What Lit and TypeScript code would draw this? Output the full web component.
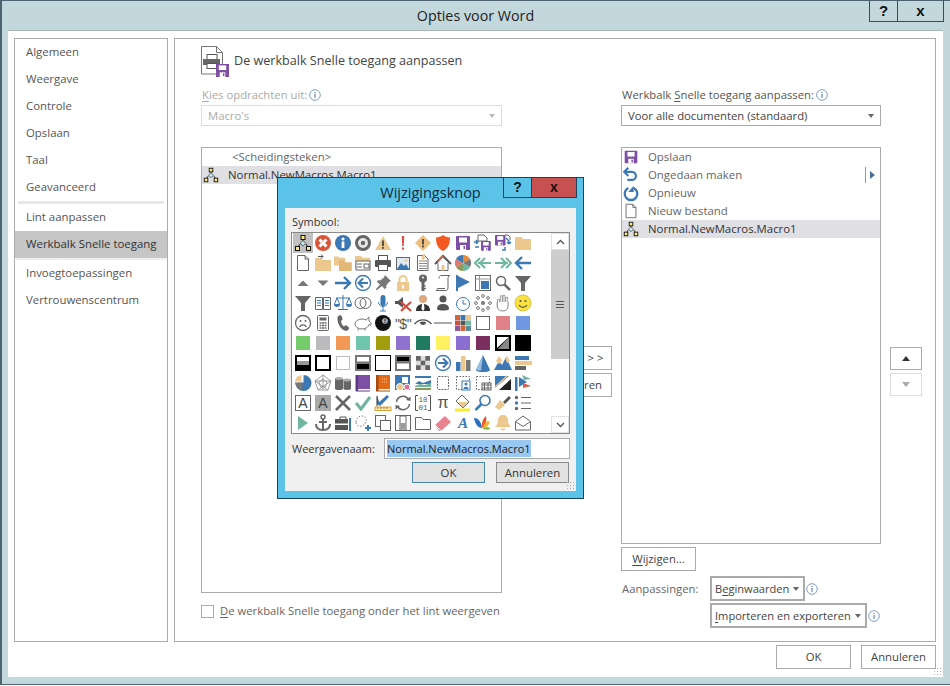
import { LitElement, html, css, svg } from 'lit';
import { customElement } from 'lit/decorators.js';

const B = '#3c78b4';
const T = '#edc88e';
const G = '#666';
const TL = '#6fb5a0';
const P = '#7d4fa5';

const floppy = (x: number, y: number, s: number, c = P) => svg`<g transform="translate(${x} ${y}) scale(${s})"><rect width="14" height="14" rx="1" fill=${c}/><rect x="3" y="1.5" width="8" height="5" fill="#fff"/><rect x="4" y="9" width="6" height="5" fill="#fff"/><rect x="7.5" y="10" width="1.6" height="3" fill=${c}/></g>`;
const folder = (x: number, y: number, s: number, c = T) => svg`<path transform="translate(${x} ${y}) scale(${s})" d="M0 2h6l2 2h8v11H0z" fill=${c}/>`;
const sq = (c: string) => svg`<rect x="3" y="3" width="14" height="14" fill=${c}/>`;
const page = svg`<path d="M4.5 2.5h7.5l3.5 3.5v11.5h-11z" fill="#fff" stroke=${G}/><path d="M12 2.5v3.5h3.5" fill="none" stroke=${G}/>`;
const dash = svg`<rect x="3.5" y="3.5" width="13" height="13" fill="#fff" stroke=${G} stroke-dasharray="1.5 1.5"/>`;
const net = svg`<path d="M10 6v2M7 11l-2 3M13 11l2 3" stroke="#222" fill="none"/><path d="M10 7.5l2.8 2.8-2.8 2.8-2.8-2.8z" fill="#bfe4ec" stroke="#333" stroke-width=".7"/><rect x="8" y="2.5" width="4" height="4" fill="#ffe97a" stroke="#111"/><rect x="2.5" y="13.5" width="4" height="4" fill="#ffe97a" stroke="#111"/><rect x="13.5" y="13.5" width="4" height="4" fill="#ffe97a" stroke="#111"/>`;
const txt = (s: string, x: number, y: number, size: number, fill: string) => svg`<text x=${x} y=${y} font-size=${size} fill=${fill} text-anchor="middle" font-family="Liberation Sans, sans-serif">${s}</text>`;
const chev = (flip: boolean) => svg`<g transform=${flip ? 'matrix(-1 0 0 1 20 0)' : ''} fill="none" stroke=${TL} stroke-width="2"><path d="M7 5l-5 5 5 5M12 5l-5 5 5 5M5 10h13"/></g>`;
const circArrow = (flip: boolean) => svg`<circle cx="10" cy="10" r="7.5" fill="#fff" stroke=${B} stroke-width="1.3"/><g transform=${flip ? 'matrix(-1 0 0 1 20 0)' : ''} fill="none" stroke=${B} stroke-width="2"><path d="M10 5.5l-4.5 4.5 4.5 4.5M6 10h9"/></g>`;
const funnel = svg`<path d="M2 3h16l-6 7v8h-4v-8z" fill=${G}/>`;

// symbol picker, 12 columns by 10 rows, in the order of the dialog
const SYMBOLS = [
  net,
  svg`<circle cx="10" cy="10" r="8" fill="#d8553b"/><path d="M6.5 6.5l7 7M13.5 6.5l-7 7" stroke="#fff" stroke-width="3"/>`,
  svg`<circle cx="10" cy="10" r="8" fill=${B}/><rect x="8.6" y="8.5" width="2.8" height="6.5" fill="#fff"/><circle cx="10" cy="6" r="1.6" fill="#fff"/>`,
  svg`<circle cx="10" cy="10" r="6.5" fill="#e8e8e8" stroke=${G} stroke-width="3"/><circle cx="10" cy="10" r="2.2" fill=${G}/>`,
  svg`<path d="M10 3l8 14H2z" fill=${T}/><rect x="9.1" y="7.5" width="1.8" height="5.5" fill="#444"/><rect x="9.1" y="14" width="1.8" height="1.8" fill="#444"/>`,
  svg`<path d="M8.7 3h2.6l-.5 10H9.2z" fill="#d9534f"/><rect x="9" y="14.5" width="2" height="2.2" fill="#d9534f"/>`,
  svg`<path d="M10 2l8 8-8 8-8-8z" fill="#ecc07c"/><rect x="9.1" y="6" width="1.8" height="5.5" fill="#444"/><rect x="9.1" y="12.5" width="1.8" height="1.8" fill="#444"/>`,
  svg`<path d="M10 2c2.5 1.8 4.5 2.4 7 2.4 0 6.5-1.8 11-7 13.6C4.800 15.400 3 10.900 3 4.400 5.500 4.400 7.500 3.800 10 2z" fill="#f25a22"/>`,
  floppy(3, 3, 1),
  svg`<path d="M5 2h6l3 3v3H5z" fill="#fff" stroke=${G}/><path d="M1 9h4M3 7l2 2-2 2M6 14H2" stroke=${B} fill="none" stroke-width="1.4"/>${floppy(8, 8, 0.7)}`,
  svg`${floppy(2, 2, 0.75)}<path d="M13 5l3 3v3M16 11l-2-2M16 11l2-2M12 14v3h-3" stroke=${B} fill="none" stroke-width="1.4"/><path d="M12 2h3l2 2v3" fill="none" stroke=${G}/>`,
  folder(2, 2, 1),

  page,
  svg`${folder(2, 3, 1)}<path d="M5 3.500h5M8 1.500l2 2-2 2" stroke="#555" fill="none"/>`,
  svg`${folder(1, 2, 0.7)}${folder(6, 6, 0.8, '#e3b877')}`,
  svg`${folder(2, 1, 0.95)}<rect x="3" y="8" width="14" height="9" fill="#fff" stroke=${G}/><path d="M4 11h5M4 14h5" stroke=${G}/><rect x="11" y="11" width="5" height="4" fill="#fff" stroke=${G}/>`,
  svg`<rect x="5.500" y="2.500" width="9" height="5" fill="#fff" stroke="#555"/><rect x="2" y="7" width="16" height="7" rx="1" fill="#555"/><rect x="5.500" y="11.500" width="9" height="6" fill="#fff" stroke="#555"/>`,
  svg`<rect x="3.500" y="4.500" width="13" height="12" fill="#dfeaf3" stroke=${G}/><path d="M4 16l4-6 3 3 2-2 3 5z" fill=${B}/><circle cx="13" cy="7.500" r="1.300" fill=${T}/>`,
  svg`<path d="M4.500 2.500h7l3.500 3.500v11.500H4.500z" fill="#fff" stroke=${G}/><path d="M6 8h8M6 10.500h8M6 13h8M6 15.500h8" stroke="#888"/><path d="M10 1l-2 5h2l-1 3 4-5h-2l1-3z" fill=${T}/>`,
  svg`<path d="M5 10v7.500h10V10" fill="#fff" stroke=${G}/><rect x="8.500" y="12" width="3" height="5.500" fill=${T}/><path d="M2 11l8-8 8 8" fill="none" stroke="#555" stroke-width="2"/><path d="M10 3l-5 5" stroke="#c96f4a" stroke-width="2"/>`,
  svg`<path d="M10 10V2a8 8 0 0 1 7 4z" fill="#e88a3a"/><path d="M10 10l7-4a8 8 0 0 1 0 8z" fill="#777"/><path d="M10 10l7 4a8 8 0 0 1-7 4z" fill=${TL}/><path d="M10 10v8a8 8 0 0 1-7-4z" fill="#8c9a5c"/><path d="M10 10l-7 4a8 8 0 0 1 0-8z" fill="#e0766e"/><path d="M10 10L3 6a8 8 0 0 1 7-4z" fill=${B}/>`,
  chev(false),
  chev(true),
  svg`<path d="M9 4l-6 6 6 6M3 10h15" fill="none" stroke=${B} stroke-width="2.400"/>`,

  svg`<path d="M4.500 13h11L10 7.500z" fill="#777"/>`,
  svg`<path d="M4.500 7.500h11L10 13z" fill="#777"/>`,
  svg`<path d="M11 4l6 6-6 6M17 10H2" fill="none" stroke=${B} stroke-width="2.400"/>`,
  circArrow(false),
  svg`<path d="M12 2l6 6-2 1-3 4 .500 2-2 1-2.500-3L4 17l-1 0 0-1 4-4.500L4 9l1-2 2 .500 4-3z" fill="#777"/>`,
  svg`<path d="M6.500 9V6.500a3.500 3.500 0 0 1 7 0V9" fill="none" stroke=${T} stroke-width="2"/><rect x="4" y="9" width="12" height="9" fill=${T}/><rect x="9" y="12" width="2" height="3.500" fill="#fff"/>`,
  svg`<circle cx="10" cy="5.500" r="4" fill=${G}/><circle cx="10" cy="4.500" r="1" fill="#fff"/><path d="M8.500 9h3v9h-3z" fill=${G}/><path d="M11 13h2M11 15.500h2" stroke=${G}/>`,
  svg`<path d="M6 5.500c0-3 2-3 2-3h9c-1 0-2 1-2 3v9c0 2-1 3-2 3H3c1 0 1.500-1 1.500-2H12" fill="none" stroke=${G}/>`,
  svg`<rect x="3" y="2" width="2" height="16" fill=${B}/><path d="M5 3l12 6-12 6z" fill=${B}/>`,
  svg`<rect x="2.500" y="2.500" width="15" height="15" fill="#fff" stroke=${G}/><path d="M2.500 6h15M6.500 2.500v15" stroke="#999"/><rect x="8" y="8" width="8" height="8" fill=${B}/>`,
  svg`<circle cx="8" cy="8" r="4.500" fill="#fff" stroke=${G} stroke-width="1.500"/><path d="M11.500 11.500l5.500 5.500" stroke=${G} stroke-width="2.500"/>`,
  funnel,

  funnel,
  svg`<path d="M2.500 4.500h7v12h-7zM10.500 4.500h7v12h-7z" fill="#fff" stroke=${G}/><path d="M4 7.500h4M4 10h4M4 12.500h4M12 7.500h4M12 10h4M12 12.500h4" stroke=${B}/>`,
  svg`<path d="M10 2v14M5 16.500h10M3 5h14M4 5l-2.500 6M4 5l2.500 6M16 5l-2.500 6M16 5l2.500 6" stroke=${B} fill="none"/><path d="M1 11h6a3 3 0 0 1-6 0zM13 11h6a3 3 0 0 1-6 0z" fill=${B}/>`,
  svg`<circle cx="7.500" cy="10" r="5.500" fill="#fff" stroke=${G}/><circle cx="12.500" cy="10" r="5.500" fill="none" stroke=${G}/>`,
  svg`<rect x="7.500" y="2" width="5" height="11" rx="2.500" fill=${B}/><path d="M5.500 9a4.500 4.500 0 0 0 9 0M10 13.500V18M7 18h6" stroke=${B} fill="none"/>`,
  svg`<path d="M2 8h3l5-4v11l-5-4H2z" fill="#555"/><path d="M8 9l10 9M18 9L8 18" stroke="#d9483a" stroke-width="2.200"/>`,
  svg`<circle cx="10" cy="6" r="4" fill="#dca982"/><path d="M3 18c0-5 3-7 7-7s7 2 7 7z" fill="#333"/><path d="M9 11h2l.500 5-1.500 2-1.500-2z" fill="#fff"/>`,
  svg`<circle cx="10" cy="6" r="3.500" fill="#555"/><path d="M4 16c0-4 3-5 6-5s6 1 6 5c0 2-12 2-12 0z" fill="#555"/>`,
  svg`<circle cx="10" cy="11" r="6.500" fill="#fff" stroke=${B}/><path d="M10 7v4h3.500" fill="none" stroke=${B}/>`,
  svg`<g fill="none" stroke="#777"><circle cx="10" cy="3" r="1.400"/><circle cx="10" cy="17" r="1.400"/><circle cx="3" cy="10" r="1.400"/><circle cx="17" cy="10" r="1.400"/><circle cx="5" cy="5" r="1.400"/><circle cx="15" cy="5" r="1.400"/><circle cx="5" cy="15" r="1.400"/><circle cx="15" cy="15" r="1.400"/></g><circle cx="10" cy="10" r="2" fill="#777"/>`,
  svg`<path d="M5.500 13V7M8.200 11V3.500M11 11V3M13.800 11V5" stroke="#888" stroke-width="2.600" stroke-linecap="round"/><path d="M5.500 13V7M8.200 11V3.500M11 11V3M13.800 11V5" stroke="#fff" stroke-width="1.200" stroke-linecap="round"/><path d="M4.500 12c0 3 2 6 5.500 6s5-2 5-5V9H4.500z" fill="#fff"/><path d="M4.200 9v4c0 3 2 5 5.800 5 3.500 0 5.100-2 5.100-5V9" fill="none" stroke="#888"/>`,
  svg`<circle cx="10" cy="10" r="8" fill="#fbe23f" stroke="#d9c34a"/><circle cx="7.500" cy="8" r="1.100" fill="#555"/><circle cx="12.500" cy="8" r="1.100" fill="#555"/><path d="M6 12a4.500 4.500 0 0 0 8 0" fill="none" stroke="#555" stroke-width="1.200"/>`,

  svg`<circle cx="10" cy="10" r="7.500" fill="#fff" stroke=${G} stroke-width="1.300"/><circle cx="7.500" cy="8" r="1" fill=${G}/><circle cx="12.500" cy="8" r="1" fill=${G}/><path d="M6.500 14a4 4 0 0 1 7 0" fill="none" stroke=${G} stroke-width="1.300"/>`,
  svg`<rect x="4.500" y="2.500" width="11" height="15" rx="1" fill="#fff" stroke=${G}/><rect x="6.500" y="4.500" width="7" height="3" fill=${G}/><path d="M6.500 10h2M9 10h2M11.500 10h2M6.500 12.500h2M9 12.500h2M11.500 12.500h2M6.500 15h2M9 15h2M11.500 15h2" stroke=${G} stroke-width="1.300"/>`,
  svg`<path d="M5 3c2-1.500 3.500-1 4 1l.500 2c.300 1-1 1.500-1.500 2 0 2 1.500 4.500 3 5.500.500-.500 1.500-1.500 2.500-1l2 1.500c1 1 .500 2-.500 3-1 1.500-4 1-6.500-1.500S4 8 4.500 4.500z" fill=${G}/>`,
  svg`<ellipse cx="9" cy="11" rx="7" ry="5" fill="#fff" stroke="#777"/><path d="M13 7l3-3v4l2 2v2h-2" fill="#fff" stroke="#777"/><path d="M5 15.500v2M12 15.500v2" stroke="#777"/>`,
  svg`<circle cx="10" cy="10" r="8" fill="#111"/><circle cx="12" cy="8" r="2.800" fill="#ccc"/>${txt('8', 12, 10, 5.500, '#111')}`,
  svg`<text x="10" y="16" font-size="14" fill="#555" text-anchor="middle" font-family="Liberation Sans, sans-serif" letter-spacing="-.5">"$"</text>`,
  svg`<path d="M1.500 11c5-5.500 12-5.500 17 0" fill="none" stroke="#555" stroke-width="1.400"/><path d="M7 9a3 3 0 0 0 6 0 8 8 0 0 0-6 0z" fill="#555"/>`,
  svg`<rect x="1" y="9.500" width="18" height="1" fill="#555"/>`,
  svg`<rect x="2" y="2" width="5" height="5" fill="#d0643a"/><rect x="7.500" y="2" width="5" height="5" fill=${B}/><rect x="13" y="2" width="5" height="5" fill=${T}/><rect x="2" y="7.500" width="5" height="5" fill="#c94f3a"/><rect x="7.500" y="7.500" width="5" height="5" fill="#555"/><rect x="13" y="7.500" width="5" height="5" fill=${TL}/><rect x="2" y="13" width="5" height="5" fill="#8c5a9a"/><rect x="7.500" y="13" width="5" height="5" fill="#d0643a"/><rect x="13" y="13" width="5" height="5" fill="#5a8a94"/>`,
  svg`<rect x="3.500" y="3.500" width="13" height="13" fill="#fff" stroke=${G}/>`,
  sq('#e08288'),
  sq('#7098e0'),

  sq('#76cc6c'),
  sq('#bbbbbd'),
  sq('#f29a55'),
  sq('#6fc6ac'),
  sq('#a29c0f'),
  sq('#8f72cf'),
  sq('#1f7a5f'),
  sq('#fdf162'),
  sq('#8b6fd0'),
  sq('#7a2f5f'),
  svg`<rect x="2" y="2" width="16" height="16" fill="#000"/><path d="M4 15L16 4H4z" fill="#fff"/><path d="M16 4v12H5z" fill="#888"/>`,
  svg`<rect x="2" y="2" width="16" height="16" fill="#000"/>`,

  svg`<rect x="2" y="2" width="16" height="16" fill="#000"/><rect x="4" y="4" width="12" height="4" fill="#fff"/><rect x="4" y="8" width="12" height="4" fill="#999"/>`,
  svg`<rect x="3" y="3" width="14" height="14" fill="#fff" stroke="#000" stroke-width="2"/>`,
  svg`<rect x="3.500" y="3.500" width="13" height="13" fill="#fff" stroke="#777" stroke-dasharray="1 1"/>`,
  svg`<rect x="3" y="3" width="14" height="14" fill="#fff" stroke="#777" stroke-width="2"/><rect x="4" y="11" width="12" height="5" fill="#000"/><rect x="4" y="8.500" width="12" height="2.500" fill="#777"/>`,
  svg`<rect x="2.500" y="2.500" width="15" height="15" fill="#fff" stroke="#000"/>`,
  svg`<rect x="3" y="3" width="14" height="14" fill="#fff" stroke="#777" stroke-width="2"/><rect x="4" y="4" width="12" height="4.500" fill="#000"/><rect x="4" y="8.500" width="12" height="2" fill="#777"/>`,
  svg`<rect x="3" y="3" width="14" height="14" fill="#ddd"/><path d="M3 3h4.700v4.700H3zM12.300 3H17v4.700h-4.700zM7.700 7.700h4.600v4.600H7.700zM3 12.300h4.700V17H3zM12.300 12.300H17V17h-4.700z" fill="#666"/>`,
  circArrow(true),
  svg`<rect x="3" y="9" width="4.500" height="9" fill=${B}/><rect x="8" y="3" width="4.500" height="15" fill=${T}/><rect x="13" y="7" width="4.500" height="11" fill="#777"/>`,
  svg`<path d="M10 2l7 15a7 2 0 0 1-14 0z" fill=${B}/><path d="M10 2l-2 15.500c-2.500 0-4-.500-5-1z" fill="#9cc0e0"/>`,
  svg`<path d="M1 17l5-9 3 4 4-8 6 13z" fill=${B}/><path d="M3 8l3-5 3.500 5-3.500 3zM12 5l2-2 3 5-3 2z" fill=${T}/>`,
  svg`<rect x="2" y="3" width="14" height="4" fill=${B}/><rect x="2" y="8" width="17" height="4" fill=${T}/><rect x="2" y="13" width="11" height="4" fill="#666"/>`,

  svg`<path d="M10.500 9.500V2a8 8 0 1 1-8 8z" fill=${B}/><path d="M8.500 8.500V2a8 8 0 0 0-6.500 6.500z" fill=${T}/><path d="M2 9.500h7.500V17A8 8 0 0 1 2 9.500z" fill="#777"/>`,
  svg`<path d="M10 2l8 6-3 9H5L2 8zM10 6l4 3-1.500 5h-5L6 9zM10 2v15M2 8l16 0M5 17L18 8M15 17L2 8" fill="none" stroke="#888" stroke-width=".8"/>`,
  svg`<path d="M2 5.500v10a4 1.500 0 0 0 8 0v-10z" fill=${G}/><ellipse cx="6" cy="5.500" rx="4" ry="1.500" fill="#aaa"/><path d="M10.500 7v9a4 1.500 0 0 0 7.500 0V7z" fill=${G}/><ellipse cx="14" cy="7" rx="4" ry="1.500" fill="#aaa"/>`,
  svg`<rect x="3" y="2" width="14" height="14" fill=${P}/><path d="M3 2v16h14" fill="none" stroke="#5c3a80"/><rect x="3" y="2" width="2" height="16" fill="#5c3a80"/>`,
  svg`<rect x="3" y="2" width="14" height="14" fill="#e56a17"/><rect x="3" y="2" width="2.500" height="16" fill="#a84a10"/><path d="M3 18h14" stroke="#a84a10"/><path d="M9 6h6M9 9h6" stroke="#fbd09f" stroke-dasharray="1 1"/>`,
  svg`<rect x="2" y="2" width="15" height="15" fill=${B}/><rect x="9" y="4" width="6" height="6" fill="#fff"/><circle cx="7" cy="14" r="3.500" fill=${T} stroke="#fff"/><circle cx="14" cy="14" r="3" fill="#e26d9c" stroke="#fff"/>`,
  svg`<rect x="2" y="3" width="16" height="14" fill="#fff"/><path d="M2 4h16" stroke=${B} stroke-width="2"/><path d="M2 11l4-3 4 2 8-3v4H2z" fill=${B}/><path d="M2 13l5-2 5 1 6-2v4H2z" fill=${TL}/><path d="M2 16h16" stroke="#8c9a5c" stroke-width="2"/>`,
  svg`<rect x="4.500" y="3.500" width="11" height="13" rx="1" fill="#fff" stroke=${G} stroke-dasharray="2 1"/>`,
  svg`${dash}<rect x="9" y="8" width="8" height="9" fill="#fff" stroke=${B}/><circle cx="13" cy="11" r="1.500" fill=${B}/><path d="M10.500 16c0-3 5-3 5 0z" fill=${B}/>`,
  svg`${dash}<rect x="9" y="10" width="9" height="7" fill="#fff" stroke=${G}/><path d="M9 12h9M9 15h9M11.500 10v7M15 10v7" stroke=${G}/>`,
  svg`<rect x="2" y="3" width="16" height="14" fill="#fff"/><path d="M2 3h14L2 15z" fill=${B}/><path d="M2 14L14 3" stroke=${T} stroke-width="1.500"/><path d="M18 17H6L18 6z" fill="#222"/>`,
  svg`<rect x="2" y="4" width="2.500" height="14" fill=${B}/><path d="M6 4l8 5-8 5z" fill=${B}/><path d="M9 2l9 4-7 1z" fill=${TL}/><path d="M10 10l8 3-8 2z" fill="#d9604a"/>`,

  svg`<rect x="2.500" y="2.500" width="15" height="15" fill="#fff" stroke=${G}/>${txt('A', 10, 15, 14, '#444')}`,
  svg`<rect x="2" y="2" width="16" height="16" fill="#aaa"/>${txt('A', 10, 15, 14, '#444')}`,
  svg`<path d="M3 3l14 14M17 3L3 17" stroke=${G} stroke-width="2.600"/>`,
  svg`<path d="M3 10l5 6L17 4" fill="none" stroke=${TL} stroke-width="3"/>`,
  svg`<path d="M4 3l3 8-3 0zM4 11l10-9 2 2-9 9z" fill=${B}/><path d="M4 3v10" stroke="#333"/><rect x="2" y="14" width="16" height="3.500" fill="#f5e7b8" stroke="#d8a33b"/><path d="M5 14v2M8 14v2M11 14v2M14 14v2" stroke="#a8781f"/>`,
  svg`<g fill="none" stroke=${G} stroke-width="1.500"><path d="M3.500 9a6.500 6.500 0 0 1 12-2.500M16.500 11a6.500 6.500 0 0 1-12 2.500"/></g><path d="M13 7l4.500 1 0-4.500zM7 13l-4.500-1 0 4.500z" fill=${G}/>`,
  svg`<path d="M5 2.500H2.500v15H5M15 2.500h2.500v15H15" fill="none" stroke="#555"/><text x="10" y="9" font-size="7.500" fill="#555" text-anchor="middle" font-family="Liberation Mono, monospace">10</text><text x="10" y="16.500" font-size="7.500" fill="#555" text-anchor="middle" font-family="Liberation Mono, monospace">01</text>`,
  txt('π', 10, 15, 16, '#555'),
  svg`<path d="M9 2l7 7-6 6-7-7z" fill="#fff" stroke=${G}/><path d="M5 9h10l-5 5.500z" fill=${T}/><rect x="2" y="15.500" width="15" height="3" fill="#f3ee2f"/>`,
  svg`<circle cx="12" cy="7.500" r="5" fill="#fff" stroke=${B} stroke-width="1.600"/><path d="M8.500 11l-6 6" stroke=${B} stroke-width="2.500"/>`,
  svg`<path d="M2 14l5-7 5 5-6 5z" fill=${T}/><path d="M10 9l6-6 2 2-6 6z" fill="#555"/>`,
  svg`<circle cx="3.500" cy="4.500" r="1.700" fill=${G}/><circle cx="3.500" cy="10" r="1.700" fill=${B}/><circle cx="3.500" cy="15.500" r="1.700" fill=${G}/><path d="M8 4.500h10M8 10h10M8 15.500h10" stroke=${G} stroke-width="1.200"/>`,

  svg`<path d="M5 3l10 7-10 7z" fill=${TL}/>`,
  svg`<circle cx="10" cy="4" r="2" fill="none" stroke=${G} stroke-width="1.500"/><path d="M10 6v12M6 9h8M3 11c0 4 3 6 7 6s7-2 7-6" fill="none" stroke=${G} stroke-width="2"/>`,
  svg`<path d="M7 6V4h6v2" fill="none" stroke="#555"/><rect x="2" y="6" width="13" height="11" fill="#555"/><rect x="2" y="10.500" width="13" height="1.500" fill="#fff"/><path d="M17 5v13" stroke=${B} stroke-width="2"/>`,
  svg`<path d="M3 9c0-4 3-6 6-6s5 3 4 6-4 5-7 4c-2 0-3-2-3-4z" fill="none" stroke="#888" stroke-dasharray="1.500 1.500"/><path d="M15 12v6M12 15h6" stroke=${B} stroke-width="2"/>`,
  svg`<rect x="2.500" y="2.500" width="10" height="11" fill="#fff" stroke=${G}/><rect x="7.500" y="7.500" width="10" height="10" fill="#fff" stroke=${G}/>`,
  svg`<rect x="2.500" y="2.500" width="15" height="15" fill="#fff" stroke=${G}/><rect x="7" y="3" width="6" height="14" fill="#fff" stroke=${G}/><rect x="7.500" y="10" width="5" height="6" fill="#999"/>`,
  svg`<path d="M2.500 4.500h6l1.500 2h7.500v10h-15z" fill="#fff" stroke=${G}/>`,
  svg`<path d="M2 12L12 3l6 6-10 9H6z" fill="#e9828c"/><path d="M2 12l6 6" stroke="#fff"/>`,
  svg`<text x="10" y="15" font-size="15" font-weight="bold" font-style="italic" fill=${B} text-anchor="middle" font-family="Liberation Serif, serif">A</text>`,
  svg`<path d="M1 5c4 0 7 3 8 10-4 0-7-4-8-10z" fill="#2a6fc0"/><path d="M9 15c-1-4 1-10 4-12 1 4 0 9-4 12z" fill="#e8562a"/><path d="M9.500 15c1-4 4-7 7-7 0 4-3 7-7 7z" fill="#f6b22f"/><path d="M9.500 15c3-1 6-1 8 0-2 2-6 2-8 0z" fill="#6cb33f"/>`,
  svg`<path d="M10 2c3 0 5 2 5 5s1 5 3 7H2c2-2 3-4 3-7s2-5 5-5z" fill=${T}/><path d="M7.500 15.500h5a2.500 2 0 0 1-5 0z" fill=${T}/>`,
  svg`<path d="M2.500 8.500L10 3l7.500 5.500v8.500h-15z" fill="#fff" stroke=${G}/><path d="M2.500 8.500l7.500 5 7.500-5" fill="none" stroke=${G}/>`,
];

const headerIcon = html`<svg class="head-icon" width="28" height="31" viewBox="0 0 28 31"><path d="M.5.500h15l6 6v21.500H.5z" fill="#fff" stroke="#777"/><path d="M15.500.500v6h6" fill="none" stroke="#777"/><rect x="6" y="8.500" width="10" height="6" fill="#fff" stroke="#555"/><rect x="2" y="13" width="17" height="6" fill="#666"/><rect x="6" y="17.500" width="10" height="5" fill="#fff" stroke="#555"/><svg x="15" y="18" width="13" height="13" viewBox="0 0 14 14"><rect width="14" height="14" fill="#7d4fa5"/><rect x="3" y="1.500" width="8" height="5" fill="#fff"/><rect x="4" y="9" width="6" height="5" fill="#fff"/><rect x="7.500" y="10" width="1.600" height="3" fill="#7d4fa5"/></svg></svg>`;

const infoIcon = html`<svg class="info" width="12" height="12" viewBox="0 0 12 12"><circle cx="6" cy="6" r="5.300" fill="#fff" stroke="#7f9fcb"/><rect x="5.400" y="5" width="1.200" height="3.800" fill="#5f83b5"/><rect x="5.400" y="3" width="1.200" height="1.200" fill="#5f83b5"/></svg>`;

const ico = (frag: unknown, size = 18) => html`<svg width=${size} height=${size} viewBox="0 0 20 20">${frag}</svg>`;

const sharedStyles = css`
  .caret {
    display: inline-block;
    flex: none;
    width: 0;
    height: 0;
    border-left: 3.500px solid transparent;
    border-right: 3.500px solid transparent;
    border-top: 4px solid #666;
  }
  .grip {
    position: absolute;
    right: 2px;
    bottom: 2px;
    width: 8px;
    height: 8px;
    background-image: radial-gradient(#aaa 0.7px, transparent 0.9px);
    background-size: 3px 3px;
  }
  u {
    text-underline-offset: 2px;
  }
`;

@customElement('symbol-dialog')
export class SymbolDialog extends LitElement {
  static styles = [
    sharedStyles,
    css`
      :host {
        position: absolute;
        left: 277px;
        top: 177px;
        width: 307px;
        height: 322px;
        box-sizing: border-box;
        border: 1px solid #17445c;
        background: #5cc3e8;
        padding: 0 7px 7px;
        display: flex;
        flex-direction: column;
        font: 11px/16px 'Open Sans', sans-serif;
        color: #333;
      }
      .bar {
        height: 30px;
        flex: none;
        display: flex;
        justify-content: center;
        position: relative;
        font-size: 14.500px;
        line-height: 29px;
        color: #0d2c40;
      }
      .caps {
        position: absolute;
        right: -1px;
        top: 0;
        display: flex;
        height: 20px;
      }
      .cap {
        box-sizing: border-box;
        border: 1px solid #17445c;
        border-top: 0;
        font: bold 14px/18px 'Liberation Sans', sans-serif;
        text-align: center;
        color: #111;
      }
      .cap.help {
        width: 29px;
      }
      .cap.close {
        width: 46px;
        margin-left: -1px;
        background: #c75050;
      }
      .client {
        flex: 1;
        background: #f0f0f0;
        padding: 6px 6px 0;
        position: relative;
      }
      .sym-label {
        padding-left: 1px;
      }
      .box {
        margin-top: 2px;
        height: 202px;
        box-sizing: border-box;
        border: 1px solid #8a8a8a;
        background: #fff;
        display: flex;
        justify-content: space-between;
        padding-left: 1px;
      }
      .cells {
        display: grid;
        grid-template-columns: repeat(12, 20px);
        grid-auto-rows: 20px;
      }
      .cell {
        width: 20px;
        height: 20px;
      }
      .cell svg {
        display: block;
      }
      .cell.on {
        background: #c0c0c0;
      }
      .scroll {
        width: 18px;
        display: flex;
        flex-direction: column;
      }
      .sb-btn {
        height: 17px;
        flex: none;
        display: flex;
        align-items: center;
        justify-content: center;
        box-sizing: border-box;
        border: 1px solid #e2e2e2;
      }
      .thumb {
        height: 109px;
        flex: none;
        background: #cdcdcd;
        display: flex;
        align-items: center;
        justify-content: center;
      }
      .rest {
        flex: 1;
      }
      .name-row {
        margin-top: 4px;
        display: flex;
        align-items: center;
      }
      .name-row label {
        width: 93px;
        padding-left: 1px;
        box-sizing: border-box;
      }
      .input {
        width: 186px;
        height: 21px;
        box-sizing: border-box;
        border: 1px solid #aaa;
        background: #fff;
        padding: 1px 2px;
        line-height: 17px;
        color: #222;
      }
      .input span {
        display: inline-block;
        background: #99c8f2;
      }
      .btns {
        margin-top: 3px;
        padding-right: 1px;
        display: flex;
        justify-content: flex-end;
        gap: 11px;
      }
      .btn {
        width: 73px;
        height: 21px;
        box-sizing: border-box;
        border: 1px solid #8a8a8a;
        background: #e1e1e1;
        text-align: center;
        line-height: 19px;
        font-size: 11.400px;
      }
      .btn.def {
        border-color: #4a86a8;
      }
    `,
  ];

  render() {
    return html`
      <div class="bar">
        Wijzigingsknop
        <div class="caps">
          <div class="cap help">?</div>
          <div class="cap close">x</div>
        </div>
      </div>
      <div class="client">
        <div class="sym-label">Symbool:</div>
        <div class="box">
          <div class="cells">
            ${SYMBOLS.map((s, i) => html`<div class="cell ${i === 0 ? 'on' : ''}">${ico(s, 20)}</div>`)}
          </div>
          <div class="scroll">
            <div class="sb-btn">
              <svg width="9" height="6" viewBox="0 0 9 6"><path d="M1 5l3.500-3.500L8 5" fill="none" stroke="#555" stroke-width="1.300"/></svg>
            </div>
            <div class="thumb">
              <svg width="8" height="7" viewBox="0 0 8 7"><path d="M0 .5h8M0 3.500h8M0 6.500h8" stroke="#555"/></svg>
            </div>
            <div class="rest"></div>
            <div class="sb-btn">
              <svg width="9" height="6" viewBox="0 0 9 6"><path d="M1 1l3.500 3.500L8 1" fill="none" stroke="#555" stroke-width="1.300"/></svg>
            </div>
          </div>
        </div>
        <div class="name-row">
          <label>Weergavenaam:</label>
          <div class="input"><span>Normal.NewMacros.Macro1</span></div>
        </div>
        <div class="btns">
          <div class="btn def">OK</div>
          <div class="btn">Annuleren</div>
        </div>
        <div class="grip"></div>
      </div>
    `;
  }
}

@customElement('app-root')
export class AppRoot extends LitElement {
  static styles = [
    sharedStyles,
    css`
      :host {
        display: block;
        position: relative;
        width: 950px;
        height: 686px;
        background: #fff;
        overflow: hidden;
        font: 11.300px/16px 'Open Sans', sans-serif;
        color: #555;
      }
      .win {
        height: 685px;
        box-sizing: border-box;
        background: #c3d8dd;
        border: 1px solid #4c6570;
        border-right: 0;
        border-left-width: 2px;
        padding: 0 7px 7px 6px;
        display: flex;
        flex-direction: column;
      }
      .titlebar {
        height: 29px;
        flex: none;
        display: grid;
        grid-template-columns: 1fr auto 1fr;
        font-size: 14.300px;
        line-height: 30px;
        color: #222;
        border-bottom: 1px solid #aab8bc;
      }
      .title {
        grid-column: 2;
      }
      .caps {
        grid-column: 3;
        justify-self: end;
        display: flex;
        height: 21px;
        margin-right: -1px;
      }
      .cap {
        box-sizing: border-box;
        border: 1px solid #3c4c54;
        border-top: 0;
        font: bold 15px/20px 'Liberation Sans', sans-serif;
        text-align: center;
        color: #111;
      }
      .cap.help {
        width: 29px;
      }
      .cap.close {
        width: 47px;
        margin-left: -1px;
      }
      .client {
        flex: 1;
        background: #fff;
        padding: 7px 7px 0 6px;
        display: flex;
        flex-direction: column;
        position: relative;
      }
      .body {
        height: 604px;
        display: flex;
        gap: 6px;
      }
      .side {
        width: 154px;
        box-sizing: border-box;
        border: 1px solid #ababab;
        font-size: 11.400px;
      }
      .side-item {
        height: 27px;
        line-height: 26px;
        padding-left: 11px;
      }
      .side-item.on {
        background: #c6c6c6;
        color: #333;
      }
      .side-sep {
        height: 3px;
        margin: 0 3px;
        background: #e8e8e8;
      }
      .side-sep.thin {
        height: 2px;
        margin: 0 1px;
        background: #eee;
      }
      .main {
        flex: 1;
        box-sizing: border-box;
        border: 1px solid #ababab;
        padding: 7px 0 0 26px;
      }
      .head {
        display: flex;
        align-items: center;
        gap: 5px;
        height: 30px;
        font-size: 12.600px;
        color: #444;
      }
      .head-icon {
        flex: none;
      }
      .cols {
        margin-top: 11px;
        display: flex;
      }
      .col {
        display: flex;
        flex-direction: column;
      }
      .col.left {
        width: 301px;
      }
      .col.right {
        width: 260px;
      }
      .label {
        height: 16px;
        padding-left: 1px;
        display: flex;
        align-items: center;
        gap: 2px;
        white-space: nowrap;
      }
      .label.off {
        color: #aaa;
      }
      .select {
        margin-top: 2px;
        height: 21px;
        box-sizing: border-box;
        border: 1px solid #ababab;
        padding: 0 6px;
        display: flex;
        align-items: center;
        justify-content: space-between;
        color: #444;
      }
      .select.off {
        border-color: #ddd;
        color: #aaa;
      }
      .select.off .caret {
        border-top-color: #bbb;
      }
      .list {
        margin-top: 21px;
        box-sizing: border-box;
        border: 1px solid #ababab;
      }
      .col.left .list {
        height: 446px;
      }
      .col.right .list {
        height: 397px;
      }
      .row {
        height: 18px;
        display: flex;
        align-items: center;
        gap: 8px;
        line-height: 18px;
        font-size: 11.400px;
        color: #666;
      }
      .row svg {
        flex: none;
      }
      .row.sel {
        background: #e0dfe4;
        color: #333;
      }
      .row.sep {
        padding-left: 30px;
      }
      .fly {
        margin-left: auto;
        margin-right: 5px;
        height: 16px;
        border-left: 1px solid #999;
        padding-left: 4px;
        display: flex;
        align-items: center;
      }
      .fly i {
        border-left: 5px solid #4a6f96;
        border-top: 4px solid transparent;
        border-bottom: 4px solid transparent;
      }
      .check-row {
        margin-top: 11px;
        display: flex;
        align-items: center;
        gap: 6px;
        height: 14px;
        color: #666;
        white-space: nowrap;
      }
      .check {
        width: 13px;
        height: 13px;
        box-sizing: border-box;
        border: 1px solid #ababab;
      }
      .btn {
        box-sizing: border-box;
        border: 1px solid #ababab;
        text-align: center;
        background: #fff;
        color: #444;
      }
      .mid {
        width: 119px;
        padding-top: 259px;
        display: flex;
        flex-direction: column;
        align-items: flex-end;
        gap: 3px;
      }
      .mid .btn {
        width: 86px;
        height: 24px;
        margin-right: 9px;
        line-height: 22px;
        text-align: right;
        padding-right: 14px;
        white-space: nowrap;
      }
      .mid .btn + .btn {
        padding-right: 9px;
      }
      .updown {
        margin-left: 9px;
        padding-top: 260px;
        display: flex;
        flex-direction: column;
        gap: 3px;
      }
      .updown .btn {
        width: 32px;
        height: 23px;
        display: flex;
        align-items: center;
        justify-content: center;
      }
      .updown .btn.off {
        border-color: #ddd;
      }
      .updown i {
        border-left: 4px solid transparent;
        border-right: 4px solid transparent;
        border-bottom: 5px solid #333;
      }
      .updown .off i {
        border-bottom: 0;
        border-top: 5px solid #aaa;
      }
      .change {
        margin-top: 3px;
        width: 75px;
        height: 24px;
        line-height: 22px;
      }
      .cust {
        margin-top: 5px;
        display: grid;
        grid-template-columns: 89px 1fr;
        row-gap: 2px;
        align-items: center;
      }
      .cust .lbl {
        padding-left: 1px;
        color: #666;
      }
      .menu-row {
        grid-column: 2;
        display: flex;
        align-items: center;
        gap: 1px;
      }
      .menu {
        height: 25px;
        box-sizing: border-box;
        border: 2px solid #ababab;
        padding: 0 4px 0 3px;
        display: flex;
        align-items: center;
        gap: 4px;
        color: #444;
        font-size: 11.100px;
        white-space: nowrap;
      }
      .foot {
        padding-top: 3px;
        display: flex;
        justify-content: flex-end;
        gap: 10px;
      }
      .foot .btn {
        width: 75px;
        height: 24px;
        line-height: 22px;
      }
    `,
  ];

  render() {
    return html`
      <div class="win">
        <div class="titlebar">
          <span class="title">Opties voor Word</span>
          <div class="caps">
            <div class="cap help">?</div>
            <div class="cap close">x</div>
          </div>
        </div>
        <div class="client">
          <div class="body">
            <nav class="side">
              ${['Algemeen', 'Weergave', 'Controle', 'Opslaan', 'Taal', 'Geavanceerd'].map(
                (t) => html`<div class="side-item">${t}</div>`,
              )}
              <div class="side-sep"></div>
              <div class="side-item">Lint aanpassen</div>
              <div class="side-item on">Werkbalk Snelle toegang</div>
              <div class="side-sep thin"></div>
              <div class="side-item">Invoegtoepassingen</div>
              <div class="side-item">Vertrouwenscentrum</div>
            </nav>
            <section class="main">
              <div class="head">${headerIcon}<span>De werkbalk Snelle toegang aanpassen</span></div>
              <div class="cols">
                <div class="col left">
                  <div class="label off"><span><u>K</u>ies opdrachten uit:</span>${infoIcon}</div>
                  <div class="select off"><span>Macro's</span><span class="caret"></span></div>
                  <div class="list">
                    <div class="row sep">&lt;Scheidingsteken&gt;</div>
                    <div class="row sel">${ico(net)}<span>Normal.NewMacros.Macro1</span></div>
                  </div>
                  <div class="check-row">
                    <div class="check"></div>
                    <span><u>D</u>e werkbalk Snelle toegang onder het lint weergeven</span>
                  </div>
                </div>
                <div class="mid">
                  <div class="btn">Toevoegen &gt; &gt;</div>
                  <div class="btn">Verwijderen</div>
                </div>
                <div class="col right">
                  <div class="label"><span>Werkbalk <u>S</u>nelle toegang aanpassen:</span>${infoIcon}</div>
                  <div class="select"><span>Voor alle documenten (standaard)</span><span class="caret"></span></div>
                  <div class="list">
                    <div class="row">${ico(floppy(3, 3, 1))}<span>Opslaan</span></div>
                    <div class="row">
                      ${ico(svg`<path d="M7 2L2.500 6.500 7 11M3 6.500h8a4.500 4.500 0 0 1 0 9H6" fill="none" stroke="#3c78b4" stroke-width="2.400"/>`)}
                      <span>Ongedaan maken</span>
                      <div class="fly"><i></i></div>
                    </div>
                    <div class="row">
                      ${ico(svg`<path d="M7 4.500a7 7 0 1 0 6 0" fill="none" stroke="#3c78b4" stroke-width="2.600"/><path d="M13 2v7H7z" fill="#3c78b4"/>`)}
                      <span>Opnieuw</span>
                    </div>
                    <div class="row">${ico(page)}<span>Nieuw bestand</span></div>
                    <div class="row sel">${ico(net)}<span>Normal.NewMacros.Macro1</span></div>
                  </div>
                  <div class="btn change"><u>W</u>ijzigen...</div>
                  <div class="cust">
                    <span class="lbl">Aanpassingen:</span>
                    <div class="menu-row">
                      <div class="menu"><span>B<u>e</u>ginwaarden</span><span class="caret"></span></div>
                      ${infoIcon}
                    </div>
                    <div class="menu-row">
                      <div class="menu"><span><u>I</u>mporteren en exporteren</span><span class="caret"></span></div>
                      ${infoIcon}
                    </div>
                  </div>
                </div>
                <div class="updown">
                  <div class="btn"><i></i></div>
                  <div class="btn off"><i></i></div>
                </div>
              </div>
            </section>
          </div>
          <div class="foot">
            <div class="btn">OK</div>
            <div class="btn">Annuleren</div>
          </div>
          <div class="grip"></div>
        </div>
      </div>
      <symbol-dialog></symbol-dialog>
    `;
  }
}
